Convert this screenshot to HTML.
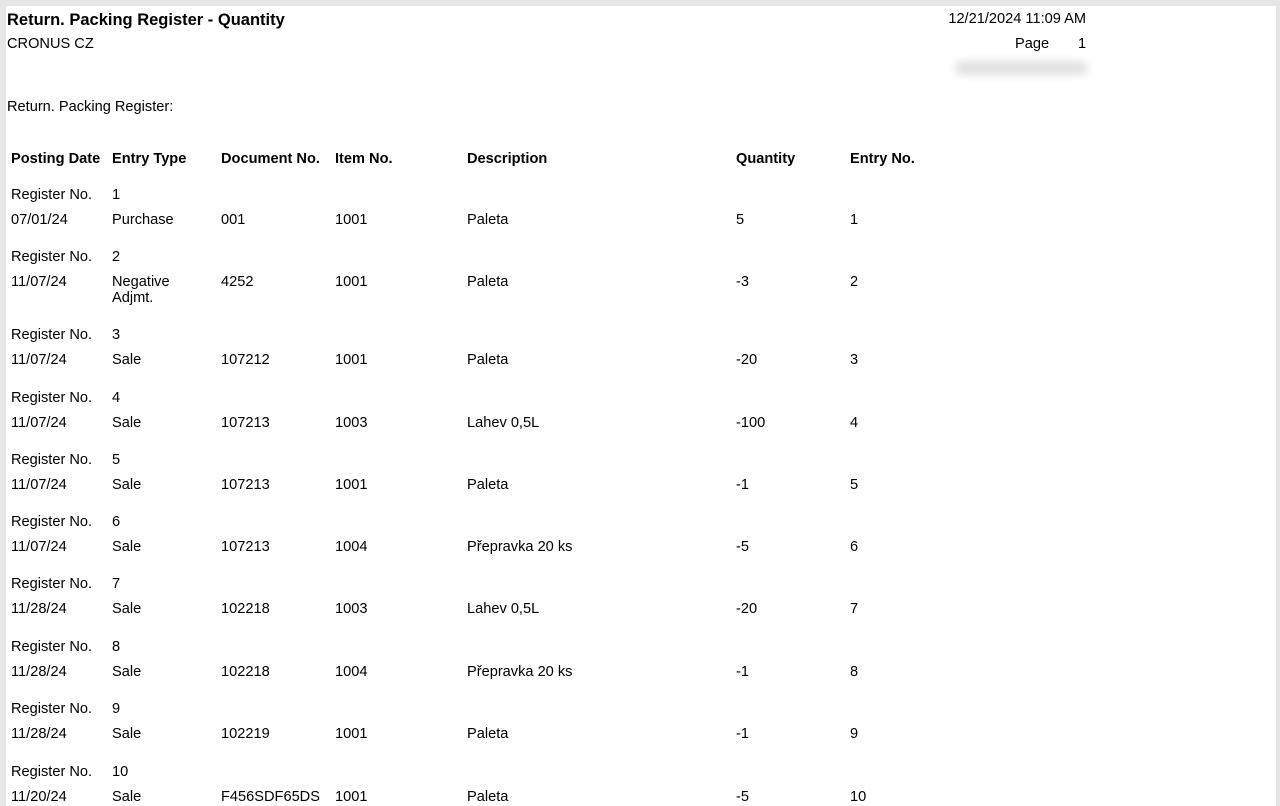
<!DOCTYPE html>
<html><head><meta charset="utf-8"><style>
body{margin:0;width:1280px;height:806px;background:#e6e6e6;overflow:hidden;font-family:"Liberation Sans",Arial,sans-serif;font-size:14.6px;color:#000}
#pg{position:absolute;left:6px;top:6px;width:1270px;height:800px;background:#fff}
.t{position:absolute;line-height:16px;white-space:nowrap;margin-top:1px}
.b{font-weight:bold}
.blur{position:absolute;left:955px;top:61px;width:133px;height:14px;background:#e2e2e2;border-radius:7px;filter:blur(4px)}
</style></head><body>
<div id="pg"></div>
<div class="t b" style="left:7px;top:11px;font-size:16.5px">Return. Packing Register - Quantity</div>
<div class="t" style="left:7px;top:35px">CRONUS CZ</div>
<div class="t" style="right:194px;top:10px">12/21/2024 11:09 AM</div>
<div class="t" style="left:1015px;top:35px">Page</div>
<div class="t" style="left:1078px;top:35px">1</div>
<div class="blur"></div>
<div class="t" style="left:7px;top:98px">Return. Packing Register:</div>
<div class="t b" style="left:11px;top:150px">Posting Date</div>
<div class="t b" style="left:112px;top:150px">Entry Type</div>
<div class="t b" style="left:221px;top:150px">Document No.</div>
<div class="t b" style="left:335px;top:150px">Item No.</div>
<div class="t b" style="left:467px;top:150px">Description</div>
<div class="t b" style="left:736px;top:150px">Quantity</div>
<div class="t b" style="left:850px;top:150px">Entry No.</div>
<div id="rows"></div>
<script>
var d=[[194,219,"07/01/24","Purchase","001","1001","Paleta","5"],
[256,281,"11/07/24","Negative<br>Adjmt.","4252","1001","Paleta","-3"],
[334,359,"11/07/24","Sale","107212","1001","Paleta","-20"],
[397,422,"11/07/24","Sale","107213","1003","Lahev 0,5L","-100"],
[459,484,"11/07/24","Sale","107213","1001","Paleta","-1"],
[521,546,"11/07/24","Sale","107213","1004","Přepravka 20 ks","-5"],
[583,608,"11/28/24","Sale","102218","1003","Lahev 0,5L","-20"],
[646,671,"11/28/24","Sale","102218","1004","Přepravka 20 ks","-1"],
[708,733,"11/28/24","Sale","102219","1001","Paleta","-1"],
[771,796,"11/20/24","Sale","F456SDF65DS","1001","Paleta","-5"]];
var x=[11,112,221,335,467,736],h="";
d.forEach(function(r,i){
h+='<div class="t" style="left:11px;top:'+(r[0]-8)+'px">Register No.</div><div class="t" style="left:112px;top:'+(r[0]-8)+'px">'+(i+1)+'</div>';
for(var k=0;k<6;k++)h+='<div class="t" style="left:'+x[k]+'px;top:'+(r[1]-8)+'px">'+r[k+2]+'</div>';
h+='<div class="t" style="left:850px;top:'+(r[1]-8)+'px">'+(i+1)+'</div>';
});
document.getElementById('rows').innerHTML=h;
</script>
</body></html>
